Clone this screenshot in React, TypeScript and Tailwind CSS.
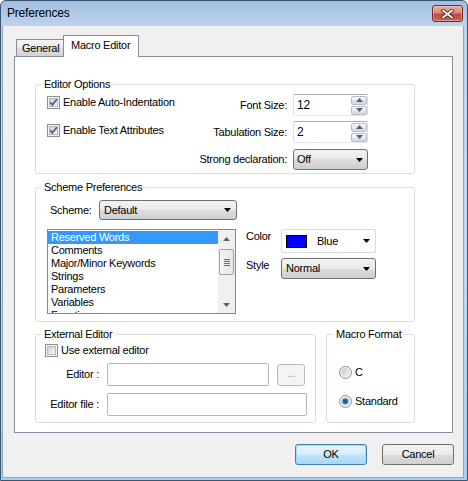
import React from "react";

const ComboArrow = () => (
  <svg width="7" height="4" viewBox="0 0 7 4" className="shrink-0">
    <path d="M0 0H7L3.5 4Z" fill="#000" />
  </svg>
);

function CheckBox({ checked, id }: { checked?: boolean; id: string }) {
  return (
    <svg width="13" height="13" viewBox="0 0 13 13" className="shrink-0">
      <defs>
        <linearGradient id={id} x1="0" y1="0" x2="1" y2="1">
          <stop offset="0" stopColor="#c9ced6" />
          <stop offset="1" stopColor="#f7f7f7" />
        </linearGradient>
      </defs>
      <rect x="0.5" y="0.5" width="12" height="12" fill="#f5f5f5" stroke="#8e8f8f" />
      <rect x="2.5" y="2.5" width="8" height="8" fill={`url(#${id})`} stroke="#b4b9bf" />
      {checked && (
        <path d="M3.3 6.3 L5.4 8.9 L9.9 3.2" fill="none" stroke="#4a5f97" strokeWidth="1.8" />
      )}
    </svg>
  );
}

function Radio({ checked, id }: { checked?: boolean; id: string }) {
  return (
    <svg width="13" height="13" viewBox="0 0 13 13" className="shrink-0">
      <defs>
        <linearGradient id={id + "g"} x1="0" y1="0" x2="1" y2="1">
          <stop offset="0" stopColor="#c6c6c6" />
          <stop offset="1" stopColor="#f8f8f8" />
        </linearGradient>
        <radialGradient id={id + "b"} cx="0.45" cy="0.45" r="0.6">
          <stop offset="0" stopColor="#0d4f87" />
          <stop offset="0.55" stopColor="#1f78b8" />
          <stop offset="1" stopColor="#8fd0f4" />
        </radialGradient>
      </defs>
      <circle cx="6.5" cy="6.5" r="6" fill="#f2f2f2" stroke="#8e8f8f" />
      <circle cx="6.5" cy="6.5" r="4.3" fill={`url(#${id}g)`} />
      {checked && <circle cx="6.5" cy="6.5" r="3.3" fill={`url(#${id}b)`} />}
    </svg>
  );
}

function SpinBtn({ up }: { up?: boolean }) {
  return (
    <div className="flex h-[9px] w-[16px] items-center justify-center rounded-[2px] border border-[#b7bdc6] bg-[linear-gradient(#f6f6f6,#ececec_50%,#dfe2e6_50%,#d6d9de)]">
      <svg width="7" height="4" viewBox="0 0 7 4">
        <path d={up ? "M0 4H7L3.5 0Z" : "M0 0H7L3.5 4Z"} fill="#4e6180" />
      </svg>
    </div>
  );
}

function Spin({ value }: { value: string }) {
  return (
    <div className="flex h-[22px] w-[75px] items-center rounded-[2px] border border-x-[#dbdfe6] border-b-[#e3e9ef] border-t-[#abadb3] bg-white pl-[3px] text-[12px]">
      <span className="flex-1">{value}</span>
      <div className="flex flex-col gap-[1px]">
        <SpinBtn up />
        <SpinBtn />
      </div>
    </div>
  );
}

const comboBg =
  "rounded-[3px] border border-[#707070] bg-[linear-gradient(#f2f2f2,#ebebeb_50%,#dddddd_50%,#cfcfcf)]";

function CloseButton() {
  return (
    <div className="ml-auto flex h-[17px] w-[31px] items-center justify-center rounded-[3px] border border-[#6b2b27] bg-[linear-gradient(#e9ada0,#d98979_45%,#c4473a_55%,#cf6454)] shadow-[inset_0_0_0_1px_rgba(255,220,210,0.45)]">
      <svg width="13" height="10" viewBox="0 0 13 10">
        <path d="M2 1.5 L11 8.5 M11 1.5 L2 8.5" stroke="#5a2320" strokeWidth="3.6" strokeLinecap="square" />
        <path d="M2 1.5 L11 8.5 M11 1.5 L2 8.5" stroke="#fff" strokeWidth="1.8" strokeLinecap="square" />
      </svg>
    </div>
  );
}

const listItems = [
  "Reserved Words",
  "Comments",
  "Major/Minor Keywords",
  "Strings",
  "Parameters",
  "Variables",
  "Functions",
];

function ListBox() {
  return (
    <div className="flex h-[85px] w-[189px] shrink-0 overflow-hidden border border-[#828790] bg-white">
      <div className="flex flex-1 flex-col overflow-hidden pt-[1px]">
        {listItems.map((t, i) => (
          <div
            key={t}
            className={
              i === 0
                ? "h-[13px] shrink-0 bg-[#3399ff] pl-[3px] text-white"
                : "h-[13px] shrink-0 pl-[3px]"
            }
          >
            {t}
          </div>
        ))}
      </div>
      <div className="flex w-[17px] shrink-0 flex-col items-center bg-[#f0f0f0]">
        <div className="flex h-[17px] items-center justify-center">
          <svg width="7" height="4" viewBox="0 0 7 4">
            <path d="M0 4H7L3.5 0Z" fill="#606060" />
          </svg>
        </div>
        <div className="mt-[2px] flex h-[26px] w-[15px] flex-col items-center justify-center gap-[1px] rounded-[2px] border border-[#9ea2a8] bg-[linear-gradient(to_right,#f4f4f4,#e6e6e6)]">
          <div className="h-[1px] w-[6px] bg-[#6b6b6b]" />
          <div className="h-[1px] w-[6px] bg-[#6b6b6b]" />
          <div className="h-[1px] w-[6px] bg-[#6b6b6b]" />
          <div className="h-[1px] w-[6px] bg-[#6b6b6b]" />
        </div>
        <div className="mt-auto flex h-[17px] items-center justify-center">
          <svg width="7" height="4" viewBox="0 0 7 4">
            <path d="M0 0H7L3.5 4Z" fill="#606060" />
          </svg>
        </div>
      </div>
    </div>
  );
}

export default function App() {
  return (
    <div className="h-[481px] w-[468px] font-['Liberation_Sans',Arial,sans-serif] text-[11px] leading-[13px] tracking-[-0.25px] text-black">
      <div className="flex h-full w-full flex-col rounded-t-[6px] border border-[#3b5574] bg-[linear-gradient(to_bottom,#a2bedf_0px,#bdd3ec_25px,#c4d8ee_50%,#a6cff0_100%)]">
        {/* Title bar */}
        <div className="flex h-[25px] shrink-0 items-center pl-[6px] pr-[4px]">
          <span className="text-[12px] tracking-[-0.2px]">Preferences</span>
          <CloseButton />
        </div>

        {/* Body */}
        <div className="mb-[2px] ml-[1px] mr-[3px] flex flex-1 flex-col border border-t-0 border-[#8fa6c0] bg-[#f0f0f0]">
          {/* Tabs */}
          <div className="mt-[9px] flex h-[21px] items-end pl-[13px]">
            <div className="flex h-[17px] w-[47px] items-center border-l border-t border-[#898c95] bg-[linear-gradient(#f3f3f3,#ebebeb_50%,#dddddd_50%,#d4d4d4)] pl-[5px]">
              General
            </div>
            <div className="relative z-10 -mb-[1px] flex h-[22px] w-[76px] items-center border-x border-t border-[#898c95] bg-white pb-[2px] pl-[7px]">
              Macro Editor
            </div>
          </div>

          {/* Panel */}
          <div className="ml-[11px] flex h-[377px] w-[439px] flex-col border border-[#898c95] bg-white pl-[20px] pt-[21px]">
            {/* Editor Options */}
            <fieldset className="h-[96px] w-[380px] rounded-[3px] border border-[#d5dfe5]">
              <legend className="ml-[5px] px-[3px] leading-[13px]">Editor Options</legend>
              <div className="flex pl-[11px] pr-[46px]">
                <div className="flex flex-col pt-[5px]">
                  <div className="flex h-[13px] items-center gap-[3px]">
                    <CheckBox checked id="cb1" />
                    <span>Enable Auto-Indentation</span>
                  </div>
                  <div className="mt-[15px] flex h-[13px] items-center gap-[3px]">
                    <CheckBox checked id="cb2" />
                    <span>Enable Text Attributes</span>
                  </div>
                </div>
                <div className="ml-auto flex flex-col items-end pt-[3px]">
                  <div className="flex h-[22px] items-center gap-[6px]">
                    <span>Font Size:</span>
                    <Spin value="12" />
                  </div>
                  <div className="mt-[5px] flex h-[22px] items-center gap-[6px]">
                    <span>Tabulation Size:</span>
                    <Spin value="2" />
                  </div>
                  <div className="mt-[6px] flex h-[21px] items-center gap-[6px]">
                    <span>Strong declaration:</span>
                    <div className={`flex h-[21px] w-[75px] items-center pl-[3px] pr-[4px] ${comboBg}`}>
                      <span className="flex-1">Off</span>
                      <ComboArrow />
                    </div>
                  </div>
                </div>
              </div>
            </fieldset>

            {/* Scheme Preferences */}
            <fieldset className="mt-[7px] h-[141px] w-[380px] rounded-[3px] border border-[#d5dfe5]">
              <legend className="ml-[5px] px-[3px] leading-[13px]">Scheme Preferences</legend>
              <div className="flex flex-col pl-[11px]">
                <div className="mt-[6px] flex h-[20px] items-center">
                  <span className="ml-[3px] w-[49px]">Scheme:</span>
                  <div className={`flex h-[20px] w-[138px] items-center pl-[4px] pr-[5px] ${comboBg}`}>
                    <span className="flex-1">Default</span>
                    <ComboArrow />
                  </div>
                </div>
                <div className="mt-[9px] flex">
                  <ListBox />
                  <div className="ml-[10px] flex flex-col">
                    <div className="flex h-[24px] items-start">
                      <span className="w-[35px] pt-[1px]">Color</span>
                      <div className="flex h-[24px] w-[95px] items-center rounded-[2px] border border-[#d5dbe2] bg-white pl-[4px] pr-[5px]">
                        <div className="h-[13px] w-[21px] border border-black bg-[#0000ff]" />
                        <span className="ml-[10px] flex-1">Blue</span>
                        <ComboArrow />
                      </div>
                    </div>
                    <div className="mt-[5px] flex h-[21px] items-start">
                      <span className="w-[35px] pt-[1px]">Style</span>
                      <div className={`flex h-[21px] w-[95px] items-center pl-[4px] pr-[5px] ${comboBg}`}>
                        <span className="flex-1">Normal</span>
                        <ComboArrow />
                      </div>
                    </div>
                  </div>
                </div>
              </div>
            </fieldset>

            {/* Bottom row */}
            <div className="mt-[6px] flex gap-[10px]">
              <fieldset className="h-[95px] w-[281px] rounded-[3px] border border-[#d5dfe5]">
                <legend className="ml-[5px] px-[3px] leading-[13px]">External Editor</legend>
                <div className="flex flex-col pl-[9px]">
                  <div className="mt-[3px] flex h-[13px] items-center gap-[3px]">
                    <CheckBox id="cb3" />
                    <span>Use external editor</span>
                  </div>
                  <div className="mt-[6px] flex h-[23px] items-center">
                    <span className="w-[62px] pr-[8px] text-right">Editor :</span>
                    <div className="h-[23px] w-[162px] rounded-[2px] border border-[#b3b7bc] bg-white" />
                    <div className="ml-[8px] flex h-[22px] w-[28px] items-center justify-center rounded-[3px] border border-[#b5b9bd] bg-[#f4f4f4] pb-[3px] text-[#8d8d8d]">
                      ...
                    </div>
                  </div>
                  <div className="mt-[7px] flex h-[23px] items-center">
                    <span className="w-[62px] pr-[8px] text-right">Editor file :</span>
                    <div className="h-[23px] w-[200px] rounded-[2px] border border-[#b3b7bc] bg-white" />
                  </div>
                </div>
              </fieldset>

              <fieldset className="h-[95px] w-[89px] rounded-[3px] border border-[#d5dfe5]">
                <legend className="ml-[6px] px-[3px] leading-[13px]">Macro Format</legend>
                <div className="flex flex-col pl-[12px]">
                  <div className="mt-[25px] flex h-[13px] items-center gap-[3px]">
                    <Radio id="r1" />
                    <span>C</span>
                  </div>
                  <div className="mt-[16px] flex h-[13px] items-center gap-[3px]">
                    <Radio checked id="r2" />
                    <span>Standard</span>
                  </div>
                </div>
              </fieldset>
            </div>
          </div>

          {/* Buttons */}
          <div className="mt-[11px] flex justify-end gap-[15px] pr-[9px]">
            <div className="flex h-[21px] w-[72px] items-center justify-center rounded-[3px] border border-[#3c7fb1] bg-[linear-gradient(#e5f4fc,#d5eefb_50%,#bde5fb_50%,#a7d9f5)] shadow-[inset_0_0_0_1px_#9ee0fb]">
              OK
            </div>
            <div className={`flex h-[21px] w-[72px] items-center justify-center ${comboBg}`}>Cancel</div>
          </div>
        </div>
      </div>
    </div>
  );
}
